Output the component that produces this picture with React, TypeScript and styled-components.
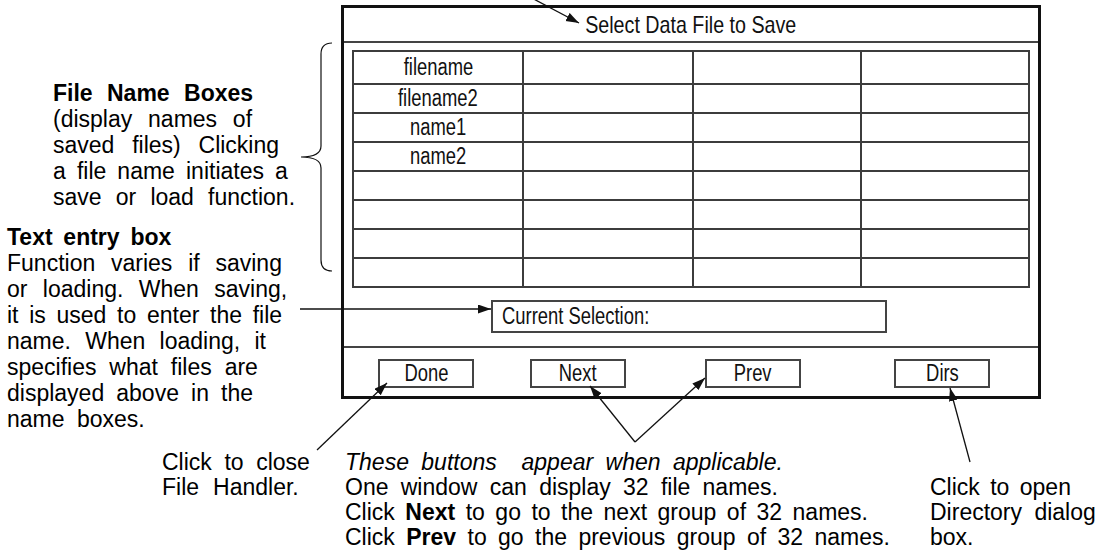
import React from 'react';
import styled, {createGlobalStyle} from 'styled-components';

const GlobalStyle = createGlobalStyle`
    html, body {
        margin: 0;
        padding: 0;
        background: #fff;
    }
    body {
        font-family: "Liberation Sans", Arial, sans-serif;
        color: #000;
    }
`;

const FILES = ['filename', 'filename2', 'name1', 'name2'];

const Page = styled.div`
    position: relative;
    width: 1104px;
    height: 554px;
    overflow: hidden;
    display: flex;
    flex-direction: column;
`;

const TopArea = styled.div`
    display: grid;
    grid-template-columns: 300px 41px 700px;
    height: 450px;
`;

const NotesColumn = styled.div`
    display: flex;
    flex-direction: column;
`;

const Note = styled.div<{$top?: number; $left?: number; $lh?: number}>`
    margin-top: ${p => p.$top ?? 0}px;
    padding-left: ${p => p.$left ?? 0}px;
    font-size: 23px;
    line-height: ${p => p.$lh ?? 26}px;
    white-space: nowrap;
`;

const Line = styled.div<{$ws?: number}>`
    word-spacing: ${p => p.$ws ?? 0}px;
`;

const Bracket = styled.svg`
    margin-top: 42px;
`;

// helvetica narrow look: no narrow face installed, so squeeze the regular one
const Narrow = styled.span<{$sx?: number; $origin?: string}>`
    display: inline-block;
    transform: scaleX(${p => p.$sx ?? 0.8});
    transform-origin: ${p => p.$origin ?? 'center'};
`;

const Dialog = styled.div`
    margin-top: 5px;
    width: 700px;
    height: 394px;
    box-sizing: border-box;
    border: 3px solid #111;
    display: flex;
    flex-direction: column;
    color: #111;
`;

const TitleBar = styled.div`
    height: 33px;
    border-bottom: 2px solid #444;
    display: flex;
    align-items: center;
    justify-content: center;
    font-size: 24px;
`;

const FileGrid = styled.div`
    margin: 7px 0 0 8px;
    width: 678px;
    box-sizing: border-box;
    display: grid;
    grid-template-columns: 168px 168px 166px 166px;
    grid-template-rows: 31px repeat(7, 27px);
    gap: 2px;
    padding: 2px;
    background: #3c3c3c;
`;

const FileCell = styled.div`
    background: #fff;
    display: flex;
    align-items: center;
    justify-content: center;
    font-size: 23px;
`;

const SelectionArea = styled.div`
    padding: 12px 0 13px 147px;
    border-bottom: 2px solid #444;
`;

const SelectionBox = styled.div`
    width: 396px;
    height: 33px;
    box-sizing: border-box;
    border: 2px solid #444;
    padding-left: 9px;
    display: flex;
    align-items: center;
    font-size: 23px;
`;

const ButtonBar = styled.div`
    display: flex;
    align-items: flex-start;
    padding-top: 11px;
`;

const DialogButton = styled.div<{$gap: number}>`
    margin-left: ${p => p.$gap}px;
    width: 96px;
    height: 29px;
    box-sizing: border-box;
    border: 2px solid #444;
    display: flex;
    align-items: center;
    justify-content: center;
    font-size: 23px;
`;

const BottomArea = styled.div`
    display: grid;
    grid-template-columns: 345px 585px 1fr;
`;

const ArrowLayer = styled.svg`
    position: absolute;
    left: 0;
    top: 0;
    pointer-events: none;
`;

const Arrow: React.FC<{x1: number; y1: number; x2: number; y2: number}> = ({x1, y1, x2, y2}) => (
    <line x1={x1} y1={y1} x2={x2} y2={y2} stroke="#111" strokeWidth={1.3} markerEnd="url(#head)" />
);

const App: React.FC = () => {
    const buttons: [string, number][] = [['Done', 34], ['Next', 56], ['Prev', 79], ['Dirs', 93]];

    return (
        <Page>
            <GlobalStyle />
            <TopArea>
                <NotesColumn>
                    <Note $top={80} $left={53}>
                        <Line $ws={8}><b>File Name Boxes</b></Line>
                        <Line $ws={9.4}>(display names of</Line>
                        <Line $ws={11.4}>saved files) Clicking</Line>
                        <Line $ws={4.7}>a file name initiates a</Line>
                        <Line $ws={7.8}>save or load function.</Line>
                    </Note>
                    <Note $top={14} $left={7}>
                        <Line $ws={4.4}><b>Text entry box</b></Line>
                        <Line $ws={9.4}>Function varies if saving</Line>
                        <Line $ws={9}>or loading. When saving,</Line>
                        <Line $ws={4.3}>it is used to enter the file</Line>
                        <Line $ws={7.9}>name. When loading, it</Line>
                        <Line $ws={6.5}>specifies what files are</Line>
                        <Line $ws={5.7}>displayed above in the</Line>
                        <Line $ws={6}>name boxes.</Line>
                    </Note>
                </NotesColumn>

                <div>
                    <Bracket width="41" height="232" viewBox="0 0 41 232">
                        <path
                            d="M32,1 Q21,1 21,12 L21,104 Q21,115 1,115 Q21,115 21,126 L21,218 Q21,229 32,229"
                            fill="none"
                            stroke="#111"
                            strokeWidth="1.2"
                        />
                    </Bracket>
                </div>

                <Dialog>
                    <TitleBar><Narrow $sx={0.82}>Select Data File to Save</Narrow></TitleBar>
                    <FileGrid>
                        {Array.from({length: 32}).map((_, i) => (
                            <FileCell key={i}>
                                {i % 4 === 0 && FILES[i / 4] ? <Narrow>{FILES[i / 4]}</Narrow> : null}
                            </FileCell>
                        ))}
                    </FileGrid>
                    <SelectionArea>
                        <SelectionBox><Narrow $origin="left">Current Selection:</Narrow></SelectionBox>
                    </SelectionArea>
                    <ButtonBar>
                        {buttons.map(([label, gap]) => (
                            <DialogButton key={label} $gap={gap}><Narrow>{label}</Narrow></DialogButton>
                        ))}
                    </ButtonBar>
                </Dialog>
            </TopArea>

            <BottomArea>
                <Note $left={162} $lh={25}>
                    <Line $ws={6.2}>Click to close</Line>
                    <Line $ws={7.6}>File Handler.</Line>
                </Note>
                <Note $lh={25}>
                    <Line $ws={6}><i>These buttons&nbsp; appear when applicable.</i></Line>
                    <Line $ws={5.9}>One window can display 32 file names.</Line>
                    <Line $ws={4.1}>Click <b>Next</b> to go to the next group of 32 names.</Line>
                    <Line $ws={5}>Click <b>Prev</b> to go the previous group of 32 names.</Line>
                </Note>
                <Note $top={25} $lh={25}>
                    <Line $ws={4}>Click to open</Line>
                    <Line $ws={6}>Directory dialog</Line>
                    <Line>box.</Line>
                </Note>
            </BottomArea>

            <ArrowLayer width="1104" height="554" viewBox="0 0 1104 554">
                <defs>
                    <marker id="head" markerUnits="userSpaceOnUse" markerWidth="14" markerHeight="10"
                        refX="13" refY="4.5" orient="auto">
                        <path d="M0,0 L13,4.5 L0,9 z" fill="#111" />
                    </marker>
                </defs>
                <Arrow x1={528} y1={-4} x2={579} y2={23} />
                <Arrow x1={300} y1={309} x2={491} y2={309} />
                <Arrow x1={317} y1={450} x2={387} y2={383} />
                <Arrow x1={635} y1={442} x2={590} y2={386} />
                <Arrow x1={635} y1={442} x2={705} y2={378} />
                <Arrow x1={970} y1={462} x2={950} y2={388} />
            </ArrowLayer>
        </Page>
    );
};

export default App;
